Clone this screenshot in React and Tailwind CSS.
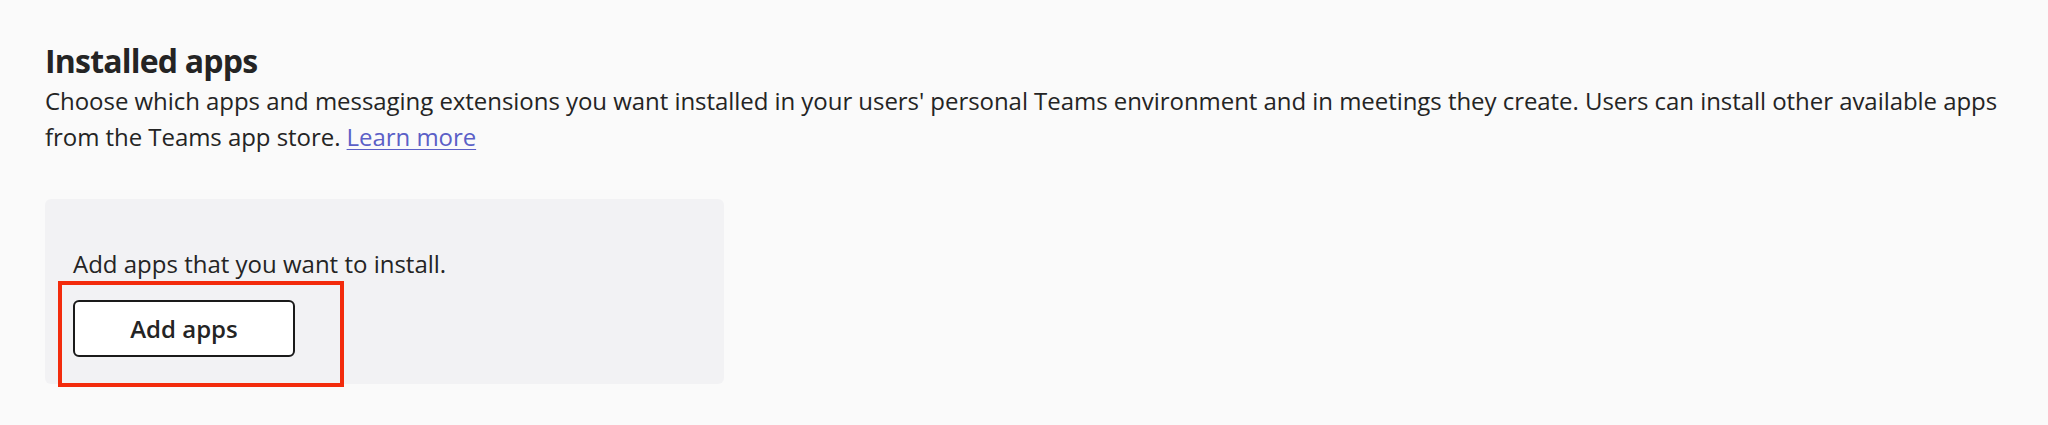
export default function App() {
  return (
    <div
      className="w-[2048px] h-[425px] bg-[#fafafa] text-[#242424] pl-[45px] pt-[41px]"
      style={{ fontFamily: '"Open Sans", "Noto Sans", sans-serif' }}
    >
      <h2 className="text-[32px] font-bold leading-[40px] tracking-[-0.8px]">Installed apps</h2>
      <p className="mt-[2px] text-[24px] leading-[36px] whitespace-nowrap tracking-[-0.05px]">
        Choose which apps and messaging extensions you want installed in your users' personal Teams environment and in meetings they create. Users can install other available apps
        <br />
        from the Teams app store.{" "}
        <a href="#" className="text-[#5b5fc7] underline underline-offset-[3px] decoration-1">
          Learn more
        </a>
      </p>
      <div className="relative mt-[44px] w-[679px] h-[185px] rounded-[6px] bg-[#f2f2f4] pl-[28px] pt-[47px]">
        <p className="text-[24px] leading-[36px]">Add apps that you want to install.</p>
        <button className="mt-[18px] w-[222px] h-[57px] rounded-[6px] border-2 border-[#1a1a1a] bg-white text-[24px] font-semibold text-[#242424] flex items-center justify-center">
          Add apps
        </button>
        <div className="absolute left-[13px] top-[82px] w-[286px] h-[106px] border-4 border-[#f32b0c]"></div>
      </div>
    </div>
  );
}
